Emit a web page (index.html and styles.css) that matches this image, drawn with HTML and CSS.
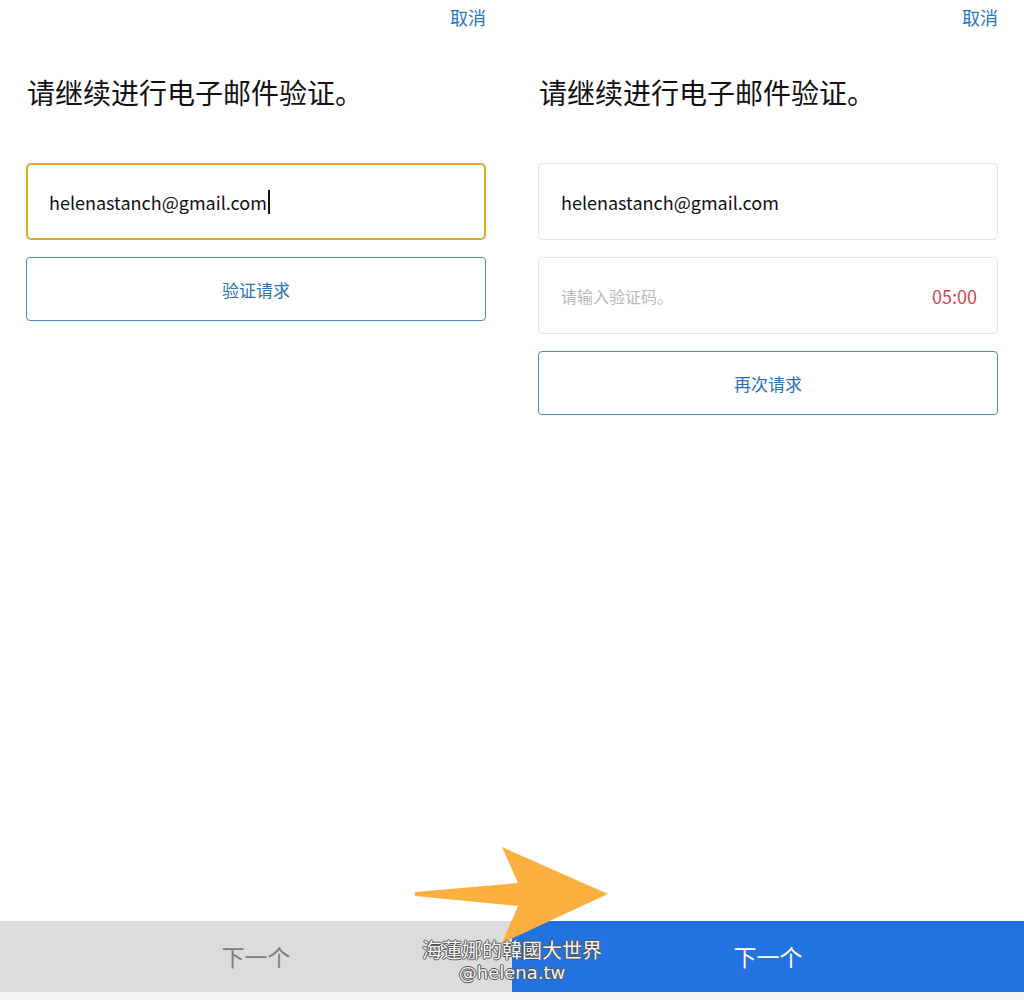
FILE: index.html
```html
<!DOCTYPE html>
<html lang="zh-CN">
<head>
    <meta charset="UTF-8">
    <meta name="viewport" content="width=device-width, initial-scale=1.0">
    <title>电子邮件验证</title>
    <link rel="stylesheet" href="styles.css">
</head>
<body>
    <div class="screens">
        <div class="screen">
            <div class="top-bar"><a class="cancel">取消</a></div>
            <h1>请继续进行电子邮件验证。</h1>
            <div class="fields">
                <div class="field focused">
                    <span class="value">helenastanch@gmail.com</span><span class="caret"></span>
                </div>
                <button class="outline-btn">验证请求</button>
            </div>
            <div class="footer">
                <div class="next disabled">下一个</div>
                <div class="home-strip"></div>
            </div>
        </div>

        <div class="screen">
            <div class="top-bar"><a class="cancel">取消</a></div>
            <h1>请继续进行电子邮件验证。</h1>
            <div class="fields">
                <div class="field">
                    <span class="value">helenastanch@gmail.com</span>
                </div>
                <div class="field">
                    <span class="placeholder">请输入验证码。</span>
                    <span class="timer">05:00</span>
                </div>
                <button class="outline-btn">再次请求</button>
            </div>
            <div class="footer">
                <div class="next">下一个</div>
                <div class="home-strip"></div>
            </div>
        </div>
    </div>

    <svg class="arrow" width="194" height="98" viewBox="0 0 194 98">
        <polygon points="0,46 103,37 87,1 193,48 87,97 103,60 0,50" fill="#fbb040"/>
    </svg>

    <div class="watermark">
        <div class="title">海蓮娜的韓國大世界</div>
        <div class="handle">@helena.tw</div>
    </div>
</body>
</html>
```

FILE: styles.css
```css
body {
    margin: 0;
    font-family: "Noto Sans CJK SC", "Noto Sans", sans-serif;
    background-color: white;
    position: relative;
}
.screens {
    display: flex;
}
.screen {
    width: 512px;
    height: 1000px;
    display: flex;
    flex-direction: column;
}
.top-bar {
    height: 34px;
    padding: 0 26px;
    display: flex;
    justify-content: flex-end;
    align-items: center;
}
.cancel {
    color: #2a78bb;
    font-size: 18px;
}
h1 {
    margin: 40px 26px 0 27px;
    font-size: 28px;
    font-weight: normal;
    line-height: 36px;
    color: #111;
}
.fields {
    margin: 53px 26px 0;
    display: flex;
    flex-direction: column;
    gap: 17px;
}
.field {
    height: 77px;
    box-sizing: border-box;
    border: 1px solid #e4e4e4;
    border-radius: 5px;
    padding: 0 20px 0 22px;
    display: flex;
    align-items: center;
}
.field.focused {
    border: 2px solid #e2a72a;
    padding-left: 21px;
}
.value {
    font-size: 18px;
    color: #111;
}
.caret {
    width: 2px;
    height: 24px;
    background-color: #111;
    margin-left: 1px;
}
.placeholder {
    font-size: 16px;
    color: #b9b9b9;
}
.timer {
    margin-left: auto;
    font-size: 18px;
    color: #d6454c;
}
.outline-btn {
    height: 64px;
    background-color: white;
    border: 1px solid #4f88c2;
    border-radius: 4px;
    color: #2a72b5;
    font-family: inherit;
    font-size: 17px;
}
.footer {
    margin-top: auto;
}
.next {
    height: 71px;
    background-color: #2273df;
    color: white;
    font-size: 23px;
    display: flex;
    justify-content: center;
    align-items: center;
    padding-bottom: 2px;
    box-sizing: border-box;
}
.next.disabled {
    background-color: #dcdcdc;
    color: #7f7f7f;
}
.home-strip {
    height: 8px;
    background-color: #f1f3f5;
}
.arrow {
    position: absolute;
    left: 415px;
    top: 846px;
}
.watermark {
    position: absolute;
    left: 412px;
    top: 938px;
    width: 200px;
    text-align: center;
    color: #f4f4f4;
    text-shadow: 1px 0 #555, -1px 0 #555, 0 1px #555, 0 -1px #555;
}
.watermark .title {
    font-family: "Noto Sans CJK TC", sans-serif;
    font-size: 20px;
    line-height: 24px;
}
.watermark .handle {
    font-family: "DejaVu Sans", sans-serif;
    font-size: 18px;
    line-height: 22px;
}
```
